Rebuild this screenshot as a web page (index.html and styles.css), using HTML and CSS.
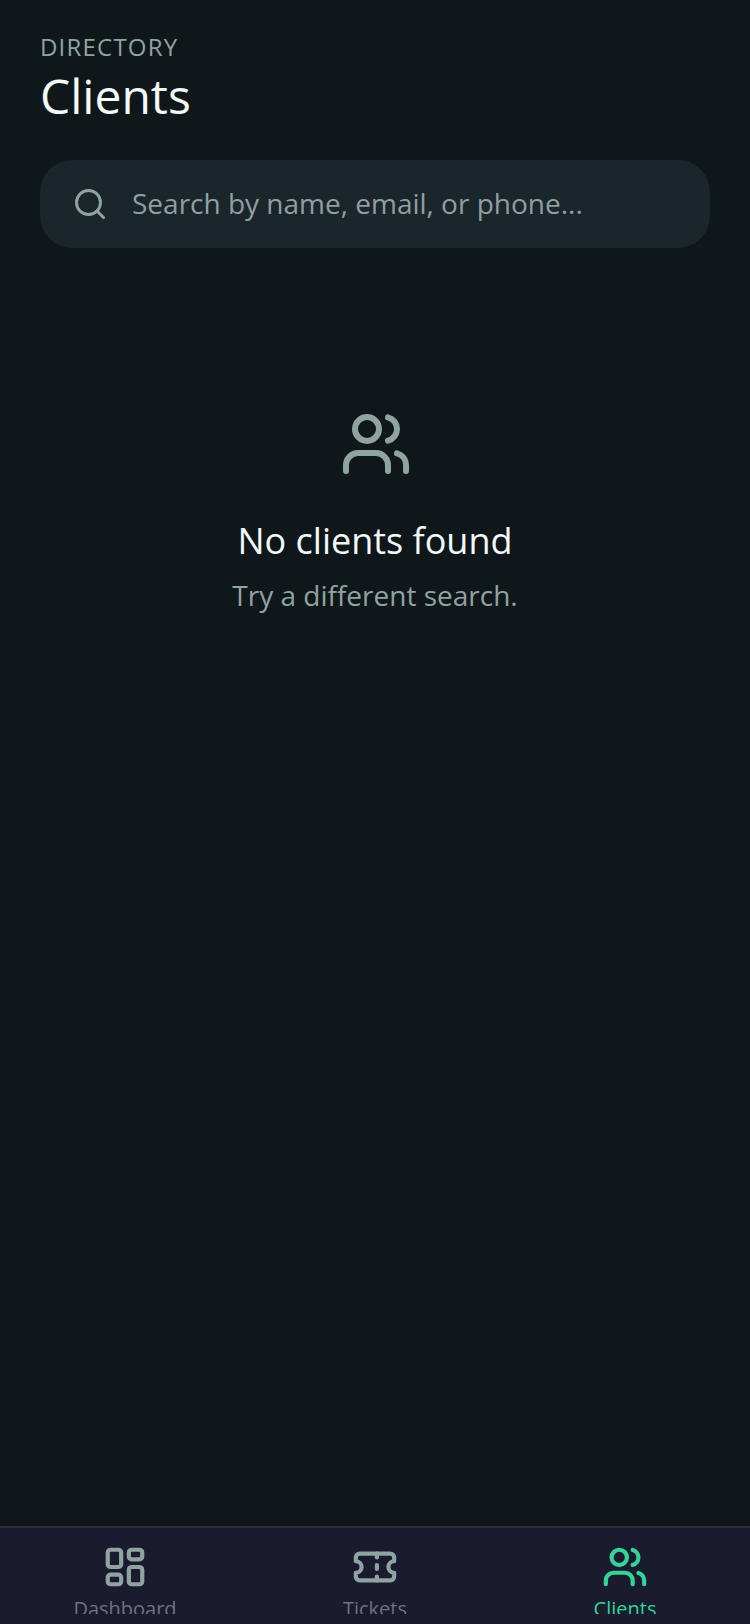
FILE: index.html
```html
<!DOCTYPE html>
<html lang="en">
<head>
<meta charset="utf-8">
<title>Clients</title>
<link rel="stylesheet" href="styles.css">
</head>
<body>
<div class="app">
  <main class="main">
    <header class="header">
      <div class="eyebrow">DIRECTORY</div>
      <h1 class="title">Clients</h1>
    </header>
    <div class="search">
      <svg class="search-icon" viewBox="0 0 24 24"><circle cx="11" cy="11" r="8"/><path d="m21 21-4.3-4.3"/></svg>
      <span class="placeholder">Search by name, email, or phone...</span>
    </div>
    <section class="empty">
      <svg class="empty-icon" viewBox="0 0 24 24"><path d="M16 21v-2a4 4 0 0 0-4-4H6a4 4 0 0 0-4 4v2"/><circle cx="9" cy="7" r="4"/><path d="M22 21v-2a4 4 0 0 0-3-3.87"/><path d="M16 3.13a4 4 0 0 1 0 7.75"/></svg>
      <h2 class="empty-title">No clients found</h2>
      <p class="empty-sub">Try a different search.</p>
    </section>
  </main>
  <nav class="nav">
    <div class="tab">
      <svg class="tab-icon" viewBox="0 0 24 24"><rect x="3" y="3" width="7" height="9" rx="1.5"/><rect x="14" y="3" width="7" height="5" rx="1.5"/><rect x="14" y="12" width="7" height="9" rx="1.5"/><rect x="3" y="16" width="7" height="5" rx="1.5"/></svg>
      <span class="tab-label">Dashboard</span>
    </div>
    <div class="tab">
      <svg class="tab-icon" viewBox="0 0 24 24"><path d="M2 9a3 3 0 0 1 0 6v2a2 2 0 0 0 2 2h16a2 2 0 0 0 2-2v-2a3 3 0 0 1 0-6V7a2 2 0 0 0-2-2H4a2 2 0 0 0-2 2Z"/><path d="M13 5v2"/><path d="M13 17v2"/><path d="M13 11v2"/></svg>
      <span class="tab-label">Tickets</span>
    </div>
    <div class="tab tab-active">
      <svg class="tab-icon" viewBox="0 0 24 24"><path d="M16 21v-2a4 4 0 0 0-4-4H6a4 4 0 0 0-4 4v2"/><circle cx="9" cy="7" r="4"/><path d="M22 21v-2a4 4 0 0 0-3-3.87"/><path d="M16 3.13a4 4 0 0 1 0 7.75"/></svg>
      <span class="tab-label">Clients</span>
    </div>
  </nav>
</div>
</body>
</html>
```
FILE: styles.css
```css
* { box-sizing: border-box; }
html, body { margin: 0; padding: 0; }
body {
  background: #0f171a;
  font-family: "Open Sans", sans-serif;
}
.app {
  width: 750px;
  height: 1624px;
  display: flex;
  flex-direction: column;
  overflow: hidden;
}
.main {
  flex: 1;
  padding: 30px 40px 0;
}
.eyebrow {
  font-size: 24px;
  line-height: 34px;
  letter-spacing: 1.2px;
  color: #8fa3a0;
}
.title {
  margin: 0;
  font-size: 48px;
  line-height: 64px;
  font-weight: 400;
  color: #f4fafa;
}
.search {
  margin-top: 32px;
  height: 88px;
  border-radius: 32px;
  background: #1b262b;
  display: flex;
  align-items: center;
  gap: 24px;
  padding: 0 32px;
}
.search-icon {
  width: 36px;
  height: 36px;
  flex: none;
  fill: none;
  stroke: #8fa3a0;
  stroke-width: 2;
  stroke-linecap: round;
  stroke-linejoin: round;
}
.placeholder {
  font-size: 28px;
  line-height: 40px;
  padding-bottom: 2px;
  color: #8f9ea2;
}
.empty {
  margin-top: 160px;
  display: flex;
  flex-direction: column;
  align-items: center;
}
.empty-icon {
  width: 72px;
  height: 72px;
  margin-left: 2px;
  fill: none;
  stroke: #8fa3a0;
  stroke-width: 2;
  stroke-linecap: round;
  stroke-linejoin: round;
}
.empty-title {
  margin: 37px 0 0;
  font-size: 36px;
  line-height: 48px;
  font-weight: 400;
  color: #f4fafa;
}
.empty-sub {
  margin: 10px 0 0;
  font-size: 28px;
  line-height: 40px;
  color: #8fa3a0;
}
.nav {
  flex: none;
  height: 98px;
  background: #1a1b2e;
  border-top: 2px solid #2b2c3e;
  display: grid;
  grid-template-columns: repeat(3, 1fr);
  grid-template-rows: minmax(0, 1fr);
  padding-bottom: 10px;
}
.tab {
  display: flex;
  flex-direction: column;
  align-items: center;
  overflow: hidden;
  padding-top: 16px;
  gap: 5px;
  color: #8fa3a0;
}
.tab-active { color: #34d399; }
.tab-icon {
  width: 46px;
  height: 46px;
  flex: none;
  fill: none;
  stroke: currentColor;
  stroke-width: 2.2;
  stroke-linecap: round;
  stroke-linejoin: round;
}
.tab-label {
  flex: none;
  font-size: 20px;
  line-height: 28px;
  color: #6b7280;
}
.tab-active .tab-label { color: #34d399; }
```
